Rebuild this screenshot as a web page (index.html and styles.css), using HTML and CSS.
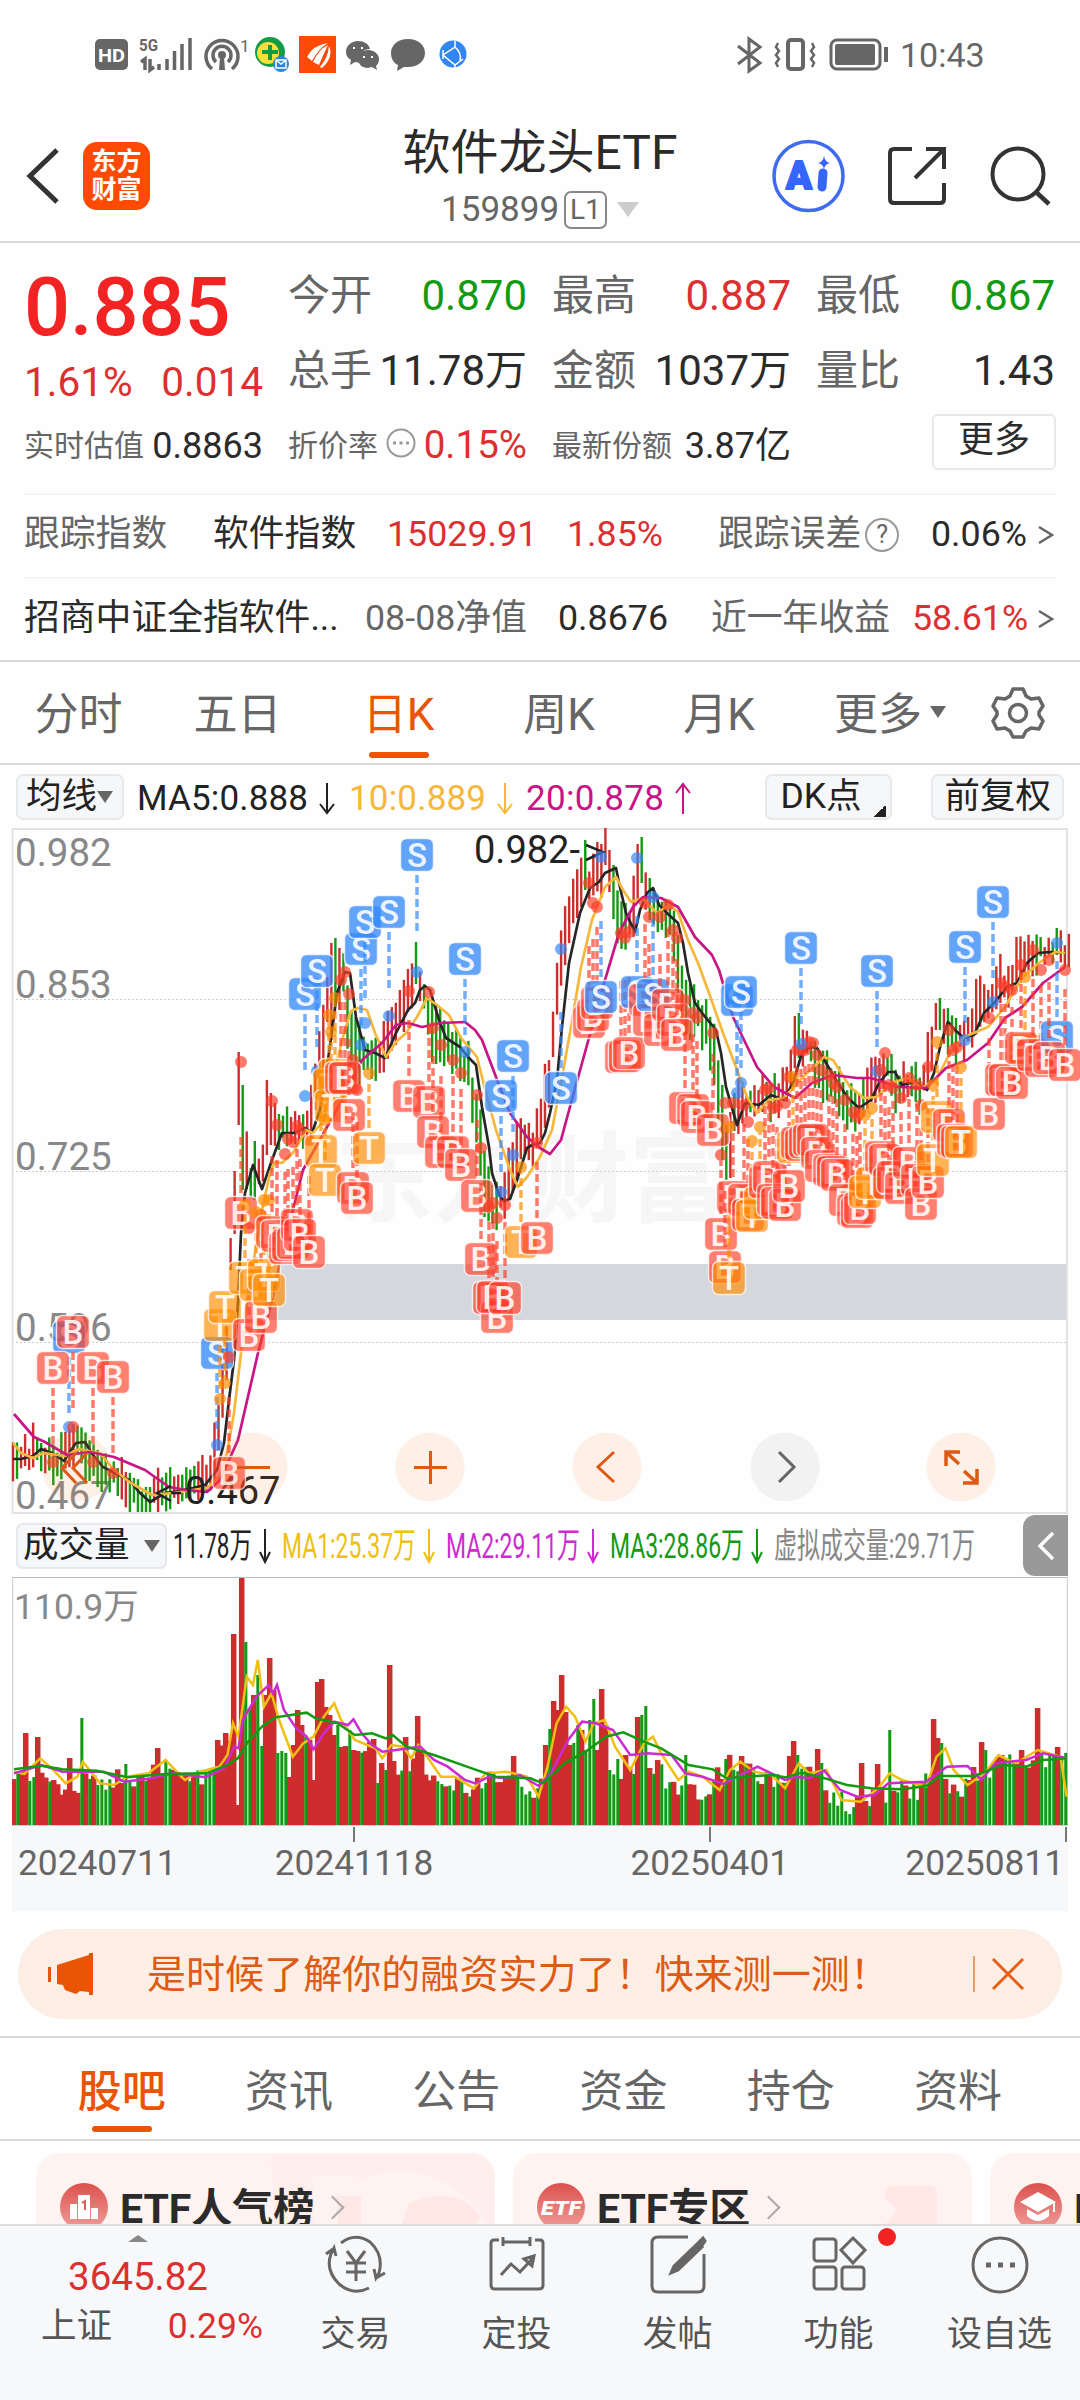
FILE: index.html
```
<!DOCTYPE html>
<html lang="zh-CN">
<head>
    <meta charset="UTF-8">
    <meta name="viewport" content="width=device-width, initial-scale=1.0">
    <title>软件龙头ETF 159899</title>
    <link rel="stylesheet" href="styles.css">
</head>
<body>
    <!-- Phone status bar -->
    <div class="status">
        <svg width="380" height="42" viewBox="92 34 380 42">
            <rect x="95" y="39" width="33" height="31" rx="5" fill="#666"/>
            <text x="98" y="62" font-size="19" font-weight="700" fill="#fff" textLength="27" lengthAdjust="spacingAndGlyphs">HD</text>
            <text x="139" y="51" font-size="16" font-weight="700" fill="#666" textLength="19" lengthAdjust="spacingAndGlyphs">5G</text>
            <path d="M141 62l4-3v11M150 59v11l4-3M159 64v6M167 59v11M174.500 51v19M182 44v26M190 38v32" stroke="#666" stroke-width="3.500" fill="none"/>
            <path d="M212 69a16 16 0 1 1 20 0M216 62a9 9 0 1 1 12 0" stroke="#666" stroke-width="3.500" fill="none"/>
            <circle cx="222" cy="55" r="4" fill="#666"/><path d="M220 57h4l1 13h-6z" fill="#666"/>
            <text x="240" y="52" font-size="17" fill="#666">1</text>
            <circle cx="270" cy="52" r="15" fill="#129c45"/><circle cx="268" cy="53" r="11" fill="#f9e03a"/>
            <path d="M262 52h16M270 45v15" stroke="#129c45" stroke-width="4"/>
            <circle cx="281" cy="64" r="8" fill="#2a86d8"/><path d="M276 60h10v8h-10zl5 4 5-4" stroke="#fff" fill="none" stroke-width="1.500"/>
            <rect x="299" y="36" width="37" height="37" fill="#ff4a05"/>
            <path d="M307 57q6-12 21-14-9 5-16 18zM313 62q6-13 15-17-4 8-9 20zM320 67q8-9 9-21 5 11-7 22z" fill="#fff"/>
            <path d="M358 41c-7 0-12 5-12 11 0 4 2 6 5 8l-1 5 5-3 5 1 1-1c-3-9 3-13 9-13-1-5-6-8-12-8zM368 50c-5 0-10 4-10 9s4 9 10 9l4-1 5 3-1-4c2-2 3-4 3-7 0-5-5-9-11-9z" fill="#666"/>
            <path d="M353 48h2M361 48h2M363 57h2M371 57h2" stroke="#fff" stroke-width="2"/>
            <path d="M408 39c-10 0-17 6-17 14 0 6 3 10 7 12l-1 6 7-4h4c10 0 17-6 17-14s-7-14-17-14z" fill="#666"/>
            <circle cx="453" cy="54" r="13.500" fill="#3385f2"/>
            <path d="M455 41v6l-12 8 12 10 8-6M455 47q7 6 5 14M443 50v9M455 65v3" fill="none" stroke="#fff" stroke-width="1.500"/>
        </svg>
        <svg class="status-right" width="154" height="42" viewBox="734 34 154 42">
            <path d="M738 46l22 17-11 8V39l11 8-22 17" fill="none" stroke="#666" stroke-width="3"/>
            <rect x="788" y="40" width="15" height="29" rx="3" fill="none" stroke="#666" stroke-width="4"/>
            <path d="M778 43l-2 4 3 4-3 4 3 4-3 4 2 4M812 43l2 4-3 4 3 4-3 4 3 4-2 4" fill="none" stroke="#666" stroke-width="2.500"/>
            <rect x="831" y="40" width="49" height="29" rx="6" fill="none" stroke="#666" stroke-width="3"/>
            <rect x="835" y="44" width="40" height="21" rx="2" fill="#666"/><path d="M886 47v15" stroke="#666" stroke-width="4"/>
        </svg>
        <span class="clock">10:43</span>
    </div>

    <!-- Header -->
    <div class="header">
        <svg class="back" width="36" height="60" viewBox="0 0 36 60"><path d="M31 4L4 30l27 26" fill="none" stroke="#333" stroke-width="5"/></svg>
        <div class="logo">东方<br>财富</div>
        <div class="title">
            <h1>软件龙头ETF</h1>
            <div class="code">159899<span class="level">L1</span><i class="tri"></i></div>
        </div>
        <svg class="tools" width="290" height="76" viewBox="770 137 290 76">
            <circle cx="808.500" cy="175" r="34.500" fill="none" stroke="#3e6bf0" stroke-width="3.500"/>
            <text x="786" y="188" font-size="38" font-weight="900" fill="#3565fb" stroke="#3565fb" stroke-width="2" stroke-linejoin="round">A</text>
            <path d="M823 172l-1 14" stroke="#3565fb" stroke-width="9" stroke-linecap="round"/>
            <path d="M824 155q1 6 6 7-5 1-6 6-1-5-6-6 5-1 6-7z" fill="#3565fb"/>
            <path d="M912 148h-18q-4 0-4 4v46q0 4 4 4h46q4 0 4-4v-16M926 148h18v20M942 150l-27 27" fill="none" stroke="#333" stroke-width="4"/>
            <circle cx="1018" cy="173" r="25.500" fill="none" stroke="#333" stroke-width="4"/>
            <path d="M1036 191l13 12" stroke="#333" stroke-width="4.500"/>
        </svg>
    </div>

    <!-- Quote summary -->
    <div class="quote">
        <div class="price">
            <b>0.885</b>
            <p><span>1.61%</span><span>0.014</span></p>
        </div>
        <div class="cell"><label>今开</label><span class="green">0.870</span></div>
        <div class="cell"><label>最高</label><span class="red">0.887</span></div>
        <div class="cell"><label>最低</label><span class="green">0.867</span></div>
        <div class="cell"><label>总手</label><span>11.78万</span></div>
        <div class="cell"><label>金额</label><span>1037万</span></div>
        <div class="cell"><label>量比</label><span>1.43</span></div>
        <div class="cell small"><label>实时估值</label><span>0.8863</span></div>
        <div class="cell small premium"><label>折价率</label>
            <svg width="30" height="30" viewBox="0 0 30 30"><circle cx="15" cy="15" r="13.500" fill="none" stroke="#999" stroke-width="2"/><path d="M7 15h3M13.500 15h3M20 15h3" stroke="#999" stroke-width="3"/></svg>
            <span class="red">0.15%</span></div>
        <div class="cell small"><label>最新份额</label><span>3.87亿</span></div>
        <div class="cell more"><button>更多</button></div>
    </div>
    <div class="track index-row">
        <span class="gray">跟踪指数</span><span>软件指数</span><span class="red">15029.91</span><span class="red">1.85%</span>
        <span class="gray">跟踪误差<i class="help">?</i></span><span>0.06%</span><svg width="18" height="24" viewBox="0 0 18 24"><path d="M2 4l13 8-13 8" fill="none" stroke="#666" stroke-width="2.500"/></svg>
    </div>
    <div class="track fund-row">
        <span>招商中证全指软件...</span><span class="gray">08-08净值</span><span>0.8676</span><span class="gray">近一年收益</span><span class="red">58.61%</span><svg width="18" height="24" viewBox="0 0 18 24"><path d="M2 4l13 8-13 8" fill="none" stroke="#666" stroke-width="2.500"/></svg>
    </div>

    <!-- Period tabs -->
    <div class="periods">
        <span>分时</span><span>五日</span><span class="active">日K</span><span>周K</span><span>月K</span><span>更多<i class="tri"></i></span>
        <svg width="54" height="54" viewBox="0 0 54 54" fill="none" stroke="#666" stroke-width="3.500"><path d="M22 3h10l3 7 5 3 8-1 4 8-4 6v3l4 6-4 8-8-1-5 3-3 6H22l-3-6-5-3-8 1-4-8 4-6v-3l-4-6 4-8 8 1 5-3z" stroke-linejoin="round"/><circle cx="27" cy="27" r="8.500"/></svg>
    </div>

    <!-- K line chart -->
    <div class="ma-row">
        <span class="chip ma-chip">均线<i class="tri"></i></span>
        <svg class="legend" width="560" height="46" viewBox="134 773 560 46" font-size="35">
            <text x="137" y="809" fill="#222" textLength="171">MA5:0.888</text><path d="M327 782v29m-7-8l7 9 7-9" stroke="#222"/>
            <text x="349" y="809" fill="#f5b83d" textLength="137">10:0.889</text><path d="M505 782v29m-7-8l7 9 7-9" stroke="#f5b83d"/>
            <text x="526" y="809" fill="#c71585" textLength="138">20:0.878</text><path d="M683 813v-29m-7 8l7-9 7 9" stroke="#c71585"/>
        </svg>
        <span class="chip dk">DK点</span>
        <span class="chip">前复权</span>
    </div>
    <svg id="kline" width="1080" height="686" viewBox="0 828 1080 686"></svg>

    <!-- Volume chart -->
    <div class="vol-row">
        <span class="chip vol-chip">成交量<i class="tri"></i></span>
        <svg class="legend" width="812" height="46" viewBox="170 1523 812 46" font-size="35">
            <g fill="#222" stroke="#222"><text x="173" y="1558" textLength="79" lengthAdjust="spacingAndGlyphs">11.78万</text><path d="M265 1529v32m-5-9l5 10 5-10"/></g>
            <g fill="#f0c010" stroke="#f0c010"><text x="282" y="1558" textLength="134" lengthAdjust="spacingAndGlyphs">MA1:25.37万</text><path d="M429 1529v32m-5-9l5 10 5-10"/></g>
            <g fill="#cc2bd1" stroke="#cc2bd1"><text x="446" y="1558" textLength="134" lengthAdjust="spacingAndGlyphs">MA2:29.11万</text><path d="M593 1529v32m-5-9l5 10 5-10"/></g>
            <g fill="#129a12" stroke="#129a12"><text x="610" y="1558" textLength="134" lengthAdjust="spacingAndGlyphs">MA3:28.86万</text><path d="M757 1529v32m-5-9l5 10 5-10"/></g>
            <text x="774" y="1558" fill="#888" textLength="201" lengthAdjust="spacingAndGlyphs">虚拟成交量:29.71万</text>
        </svg>
        <span class="drawer"><svg width="20" height="32" viewBox="0 0 20 32"><path d="M17 3L4 16l13 13" fill="none" stroke="#fff" stroke-width="3.500"/></svg></span>
    </div>
    <div class="volume">
        <svg id="volume" width="1056" height="249" viewBox="17 231 1534 747" preserveAspectRatio="none"></svg>
        <span class="vol-max">110.9万</span>
    </div>
    <div class="dates"><span>20240711</span><span>20241118</span><span>20250401</span><span>20250811</span></div>

    <!-- Promo banner -->
    <div class="banner">
        <svg width="48" height="42" viewBox="0 0 48 42" fill="#e95504"><path d="M1 14h3v15H1zM10 12L42 2V0h4v42h-4v-3l-9-1-4 3-11-4-2-5-6-1z"/></svg>
        <span class="promo">是时候了解你的融资实力了！快来测一测！</span>
        <i class="bar"></i>
        <svg width="34" height="34" viewBox="0 0 34 34"><path d="M2 2l30 30M32 2L2 32" stroke="#e46018" stroke-width="3"/></svg>
    </div>

    <!-- Info tabs -->
    <div class="info-tabs">
        <span class="active">股吧</span><span>资讯</span><span>公告</span><span>资金</span><span>持仓</span><span>资料</span>
    </div>
    <div class="cards">
        <div class="card rank">
            <svg width="48" height="48" viewBox="0 0 48 48"><circle cx="24" cy="24" r="24" fill="url(#pink)"/><path d="M10 21h7v15h-7zM18 12h12v24H18zM31 25h7v11h-7z" fill="#fff"/><path d="M22 20l3-2v9" fill="none" stroke="#e05a55" stroke-width="2"/></svg>
            <b>ETF人气榜</b><i class="go"></i>
            <svg class="deco" width="224" height="80" viewBox="0 0 224 80"><path d="M0 0h224v80H3z" fill="#ffeeec"/><path d="M41 22h38l12 4q46-18 85 5 31 18 46 49H44z" fill="#fff3f1"/><path d="M65 43h25v37H68zM128 80l10-30q50-20 72 15l-14 15-16-7-13 7z" fill="#ffe7e5"/></svg>
        </div>
        <div class="card">
            <svg width="48" height="48" viewBox="0 0 48 48"><defs><linearGradient id="pink" x2="0" y2="1"><stop stop-color="#dc514d"/><stop offset="1" stop-color="#f0a09c"/></linearGradient></defs><circle cx="24" cy="24" r="24" fill="url(#pink)"/><text x="4" y="32" font-size="20" font-weight="900" font-style="italic" fill="#fff" textLength="40" lengthAdjust="spacingAndGlyphs">ETF</text></svg>
            <b>ETF专区</b><i class="go"></i>
            <svg class="deco arrow" width="56" height="40" viewBox="0 0 56 40"><path d="M8 0h38q7 0 7 8v32H0l13-16L1 12Q0 2 8 0z" fill="#ffe7e5"/></svg>
        </div>
        <div class="card">
            <svg width="48" height="48" viewBox="0 0 48 48"><circle cx="24" cy="24" r="24" fill="url(#pink)"/><path d="M24 9L6 19l18 10 18-10zM13 26v7q11 10 22 0v-7l-11 6zM39 20h2v9h-2z" fill="#fff"/></svg>
            <b>ETF</b>
        </div>
    </div>

    <!-- Bottom bar -->
    <div class="bottom">
        <div class="market">
            <i class="up"></i>
            <span class="red point">3645.82</span>
            <p><span>上证</span><span class="red">0.29%</span></p>
        </div>
        <div class="nav"><svg viewBox="0 0 66 60"><path d="M18 9Q32-2 47 8q14 13 9 31l-3 5-2-9M53 44l9-5M46 54q-16 8-30-4Q2 36 8 20l3-6 2 8M10 15l-7 5"/><path d="M24 17l9 12 9-12M23 29h20M23 38h20M33 29v18"/></svg>交易</div>
        <div class="nav"><svg viewBox="0 0 66 60"><path d="M15 6h-5q-3 0-3 3v42q0 4 4 4h44q4 0 4-4V9q0-3-3-3h-5M19 8h28M19 3v9M46 3v9M17 41l10-11 9 8 13-14M40 25l10-3-2 10z"/></svg>定投</div>
        <div class="nav"><svg viewBox="0 0 66 60"><path d="M43 3H13Q7 3 7 9v43q0 6 6 6h40q6 0 6-6V20"/><path d="M26 39l3-7 24-23 4 4-24 23zM55 7l3-3 2 3-2 3z" fill="#666"/></svg>发帖</div>
        <div class="nav"><svg viewBox="0 0 66 60"><rect x="8" y="5" width="22" height="22" rx="3"/><rect x="8" y="33" width="22" height="22" rx="3"/><rect x="36" y="33" width="22" height="22" rx="3"/><path d="M47 4l12 12-12 13-12-13z"/></svg>功能<i class="dot"></i></div>
        <div class="nav"><svg viewBox="0 0 66 60"><circle cx="33" cy="31" r="27"/><path d="M19 31h5M31 31h5M43 31h5" stroke-width="5"/></svg>设自选</div>
    </div>
    <script src="chart.js"></script>
</body>
</html>
```
FILE: styles.css
```
* {
    box-sizing: border-box;
}
body {
    margin: 0;
    width: 1080px;
    height: 2400px;
    overflow: hidden;
    background: #fefefe;
    color: #2b2b2b;
    font-family: Roboto, "Noto Sans CJK SC", sans-serif;
    font-size: 35px;
    line-height: 1;
}
h1, p {
    margin: 0;
    font-weight: 400;
}
i {
    font-style: normal;
}
svg {
    flex: none;
    display: block;
}
.red { color: #dc3030; }
.green { color: #129a12; }
.gray { color: #666; }
.tri {
    display: inline-block;
    border: 8px solid transparent;
    border-top: 12px solid #666;
    border-bottom: 0;
}
.status {
    display: flex;
    align-items: center;
    height: 110px;
    padding-left: 92px;
    color: #666;
}
.status-right {
    margin-left: 262px;
}
.clock {
    margin-left: 12px;
    font-size: 34px;
}
.header {
    display: flex;
    align-items: center;
    height: 133px;
    padding: 0 20px 0 26px;
    border-bottom: 2px solid #d8d8d8;
}
.logo {
    width: 67px;
    height: 68px;
    margin-left: 21px;
    padding: 6px 0;
    border-radius: 14px;
    background: #ff4a05;
    color: #fff;
    font-size: 25px;
    font-weight: 700;
    line-height: 28px;
    text-align: center;
}
.title {
    flex: 1;
    padding: 6px 0 0 160px;
    text-align: center;
}
.title h1 {
    font-size: 48px;
    white-space: nowrap;
}
.code {
    display: flex;
    align-items: center;
    justify-content: center;
    height: 38px;
    margin-top: 14px;
    color: #666;
}
.level {
    margin: 0 10px 0 5px;
    padding: 3px 4px;
    border: 2px solid #888;
    border-radius: 7px;
    font-size: 28px;
}
.code .tri {
    border-width: 15px 11px 0;
    border-top-color: #ccc;
}
.quote {
    display: grid;
    grid-template-columns: repeat(4, 1fr);
    grid-auto-rows: 75px;
    column-gap: 25px;
    height: 250px;
    padding: 15px 25px 0 24px;
}
.price {
    grid-row: span 2;
    color: #dc3030;
    font-size: 40.5px;
}
.price b {
    display: block;
    margin-top: 9px;
    color: #f22323;
    font-size: 81px;
    font-weight: 500;
}
.price p {
    display: flex;
    justify-content: space-between;
    margin-top: 14px;
}
.cell {
    display: flex;
    align-items: center;
    justify-content: space-between;
    font-size: 42px;
    white-space: nowrap;
}
.cell label {
    color: #666;
    font-size: 42px;
}
.cell.small {
    font-size: 36px;
}
.cell.small label {
    font-size: 30px;
}
.premium svg {
    margin-bottom: 6px;
}
.premium span {
    font-size: 38.5px;
}
.cell.more {
    justify-content: flex-end;
}
button {
    width: 124px;
    height: 56px;
    margin: 0 -1px 8px 0;
    padding: 0 0 4px;
    border: 2px solid #e8e8e8;
    border-radius: 6px;
    background: #fff;
    color: #2b2b2b;
    font: 36px/1 Roboto, "Noto Sans CJK SC", sans-serif;
}
.track {
    display: grid;
    align-items: center;
    height: 84px;
    margin: 0 24px;
    padding-bottom: 2px;
    border-top: 2px solid #f4f5f7;
    font-size: 35.8px;
    white-space: nowrap;
}
.index-row {
    grid-template-columns: 189px 174px 180px 151px 213px 106px 18px;
}
.fund-row {
    grid-template-columns: 341px 193px 153px 201px 125px 18px;
    height: 83px;
}
.help {
    display: inline-block;
    width: 34px;
    height: 34px;
    margin-left: 4px;
    border: 2px solid #999;
    border-radius: 50%;
    font-size: 25px;
    line-height: 30px;
    text-align: center;
    vertical-align: 3px;
}
.periods {
    display: grid;
    grid-template-columns: 157px 161px 161px 160px 160px 182px 54px;
    column-gap: 0;
    align-items: center;
    height: 105px;
    border-top: 2px solid #d8d8d8;
    border-bottom: 2px solid #d8d8d8;
    color: #666;
    font-size: 44px;
    text-align: center;
}
.periods span {
    position: relative;
    padding-top: 5px;
}
.periods svg {
    margin-left: 10px;
}
.periods .tri {
    margin-left: 8px;
    vertical-align: 12px;
}
.active {
    position: relative;
    color: #e95504;
}
.active::after {
    content: "";
    position: absolute;
    left: 50%;
    bottom: -21px;
    width: 60px;
    height: 6px;
    margin-left: -30px;
    border-radius: 3px;
    background: #e95504;
}
.ma-row, .vol-row {
    display: flex;
    align-items: center;
    height: 63px;
    padding: 0 16px;
}
.chip {
    display: flex;
    align-items: center;
    height: 46px;
    padding: 0 11px;
    border: 2px solid #e6e8ec;
    border-radius: 7px;
    background: #f6f7f9;
    color: #222;
    font-size: 35.5px;
    white-space: nowrap;
}
.ma-chip {
    width: 108px;
    padding: 0 8px;
}
.legend {
    margin-left: 10px;
}
.legend path {
    fill: none;
    stroke-width: 2;
}
.legend text {
    stroke: none;
}
.dk {
    width: 127px;
    margin: 0 39px 0 auto;
    padding-left: 13px;
    background: linear-gradient(135deg, transparent 50%, #222 50%) 107px 29px / 12px 12px no-repeat, #f6f7f9;
}
#kline text {
    font-family: Roboto, "Noto Sans CJK SC", sans-serif;
}
.vol-row {
    padding-right: 12px;
}
.vol-chip {
    width: 151px;
    padding: 0 5px;
}
.vol-chip .tri {
    margin-left: 14px;
}
.vol-row .legend {
    margin-left: 3px;
}
.drawer {
    display: flex;
    align-items: center;
    justify-content: center;
    width: 45px;
    height: 61px;
    margin-left: auto;
    border-radius: 12px 0 0 12px;
    background: #999;
}
.volume {
    position: relative;
    margin: 0 12px;
}
.vol-max {
    position: absolute;
    left: 2px;
    top: 13px;
    color: #888;
    font-size: 35.5px;
}
.dates {
    display: flex;
    height: 85px;
    margin: 0 12px;
    padding: 20px 4px 0 6px;
    background: linear-gradient(#777, #777) 341px 1px / 2px 15px no-repeat,
        linear-gradient(#777, #777) 697px 1px / 2px 15px no-repeat,
        linear-gradient(#777, #777) 1053px 1px / 2px 15px no-repeat, #f7f8fa;
    color: #666;
    font-size: 35.3px;
}
.dates span:nth-child(2) { margin-left: 98px; }
.dates span:nth-child(3) { margin-left: 197px; }
.dates span:nth-child(4) { margin-left: auto; }
.banner {
    display: flex;
    align-items: center;
    height: 90px;
    margin: 18px 18px 17px;
    padding: 0 37px 0 29px;
    border-radius: 45px;
    background: #fdeee5;
    color: #dd5b14;
}
.promo {
    flex: 1;
    margin-left: 52px;
    padding-top: 2px;
    font-size: 39px;
    letter-spacing: .05px;
}
.bar {
    width: 2px;
    height: 36px;
    margin-right: 16px;
    background: #e89c70;
}
.info-tabs {
    display: grid;
    grid-template-columns: repeat(6, 167.3px);
    align-items: center;
    height: 105px;
    padding-left: 38px;
    border-top: 2px solid #d8d8d8;
    border-bottom: 2px solid #d8d8d8;
    color: #666;
    font-size: 44px;
    text-align: center;
}
.info-tabs span {
    padding-top: 7px;
}
.info-tabs .active {
    font-weight: 500;
}
.info-tabs .active::after {
    bottom: -18px;
}
.cards {
    display: flex;
    gap: 18px;
    height: 83px;
    padding: 12px 0 0 36px;
    overflow: hidden;
}
.card {
    position: relative;
    display: flex;
    flex: none;
    align-items: flex-start;
    width: 459px;
    height: 140px;
    padding: 30px 24px;
    border-radius: 24px;
    background: #fff3f1;
    overflow: hidden;
}
.card:last-child {
    width: 100px;
    border-radius: 24px 0 0 0;
}
.card b {
    margin: 6px 0 0 12px;
    font-size: 41px;
    z-index: 1;
}
.deco {
    position: absolute;
    right: 0;
    top: 0;
}
.deco.arrow {
    right: 32px;
    top: 33px;
}
.go {
    width: 17px;
    height: 17px;
    margin: 16px 0 0 10px;
    border: solid #aaa;
    border-width: 2px 2px 0 0;
    transform: rotate(45deg);
    z-index: 1;
}
.bottom {
    position: relative;
    display: flex;
    height: 176px;
    border-top: 2px solid #dcdcdc;
    background: #f7f8fa;
    color: #555;
}
.market {
    width: 275px;
    padding-top: 9px;
}
.up {
    display: block;
    width: 0;
    margin-left: 128px;
    border: 10px solid transparent;
    border-top: 0;
    border-bottom: 7px solid #888;
}
.point {
    display: block;
    margin: 16px 0 0 68px;
    font-size: 38.5px;
}
.market p {
    display: flex;
    justify-content: space-between;
    margin: 12px 12px 0 41px;
    font-size: 35.5px;
}
.nav {
    position: relative;
    width: 161px;
    padding-top: 8px;
    text-align: center;
}
.nav svg {
    width: 66px;
    height: 60px;
    margin: 0 auto 23px;
    fill: none;
    stroke: #666;
    stroke-width: 3;
}
.dot {
    position: absolute;
    left: 120px;
    top: 2px;
    width: 18px;
    height: 18px;
    border-radius: 50%;
    background: #f22323;
}
```
FILE: chart.js
```
const RED = '#cd2d2d', GREEN = '#129a12';

// Moving averages of the price
const ma5 = '13,1459 21,1459 33,1456 41,1449 52,1453 64,1461 69,1453 76,1443 85,1442 93,1455 103,1467 119,1475 129,1480 139,1492 150,1502 165,1493 179,1491 193,1488 205,1485 217,1470 224,1443 229,1400 234,1360 238,1303 241,1233 245,1193 253,1165 262,1189 272,1160 282,1133 293,1133 305,1128 312,1133 320,1110 329,1053 337,993 345,972 350,973 356,1017 365,1050 375,1053 385,1058 396,1033 408,1010 415,1003 420,990 425,986 430,990 439,1020 446,1038 460,1047 468,1057 476,1065 482,1107 489,1147 492,1173 499,1195 504,1201 510,1199 517,1180 527,1148 532,1145 540,1143 545,1133 550,1113 557,1080 562,1027 569,963 580,913 590,888 599,882 605,873 616,868 619,883 626,913 635,932 640,910 647,893 653,888 659,905 669,915 678,923 683,943 688,973 695,1003 702,1013 716,1030 721,1053 726,1087 737,1125 745,1103 759,1105 771,1095 784,1100 793,1083 802,1053 810,1047 817,1048 826,1063 836,1080 848,1098 859,1108 871,1100 879,1083 888,1072 895,1072 902,1085 915,1082 927,1090 934,1073 941,1043 948,1022 955,1030 964,1038 974,1035 984,1013 995,1002 1007,987 1017,983 1027,963 1038,953 1050,952 1062,953';
const ma10 = '13,1443 21,1453 33,1458 43,1453 65,1456 79,1449 100,1453 114,1470 131,1483 152,1495 172,1493 207,1488 219,1477 227,1453 234,1413 241,1353 248,1293 255,1253 262,1210 270,1173 275,1162 282,1163 293,1153 306,1130 313,1133 324,1120 334,1073 344,1033 351,1011 358,1008 367,1010 375,1033 386,1057 396,1042 406,1033 417,1017 427,998 437,1005 449,1015 461,1038 477,1057 486,1093 496,1130 510,1170 518,1187 527,1177 540,1157 552,1130 561,1083 571,1027 581,967 592,920 605,887 616,877 623,890 631,902 642,898 657,913 669,905 678,912 688,940 698,963 709,993 723,1033 736,1067 747,1097 757,1113 769,1100 784,1098 802,1078 824,1057 833,1060 850,1087 864,1098 877,1097 891,1083 908,1078 922,1088 936,1080 950,1053 964,1037 988,1027 1005,1007 1022,978 1039,963 1055,952 1065,953';
const ma20 = '14,1414 34,1437 45,1442 67,1455 90,1452 114,1457 145,1470 169,1487 186,1490 207,1492 220,1480 238,1440 258,1353 272,1300 282,1253 303,1170 327,1127 344,1097 362,1060 382,1043 396,1025 408,1023 422,1027 441,1023 465,1022 475,1030 482,1040 496,1077 510,1113 527,1137 540,1148 550,1154 561,1140 571,1103 592,1027 605,980 619,933 633,907 643,897 661,898 678,907 695,937 712,955 719,970 733,1017 757,1067 774,1087 795,1098 812,1083 833,1075 857,1078 871,1078 898,1087 926,1088 946,1068 967,1060 988,1043 1005,1018 1022,1007 1043,983 1065,967';

// Trades: type, x, badge y, dot y
const trades = [
    ['S',69,1337,1427],['B',73,1332,1427],['B',53,1368,1462],['B',93,1368,1462],['B',113,1377,1473],
    ['S',217,1353,1445],['T',220,1325,1399],['T',225,1307,1383],['B',229,1473,1357],
    ['B',241,1213,1062],['B',249,1335,1228],['B',261,1317,1215],['T',245,1278,1205],['T',256,1285,1212],['T',264,1275,1200],['T',269,1290,1200],
    ['B',272,1232,1101],['B',277,1236,1125],['B',285,1248,1154],['B',288,1245,1139],['B',293,1243,1142],['B',297,1225,1126],['B',300,1235,1130],['B',309,1252,1140],
    ['S',305,994,1096],['S',317,971,1071],['T',335,1075,998],['T',329,1085,1015],['T',331,1106,1032],['T',321,1151,1073],['T',325,1180,1120],
    ['B',341,1078,980],['B',345,1078,972],['B',349,1115,994],['B',353,1188,1060],['B',357,1198,1090],['T',369,1148,1073],
    ['S',361,949,1045],['S',365,922,1023],['S',389,912,1016],['S',417,855,972],['S',465,959,1052],
    ['B',409,1096,991],['B',429,1102,992],['B',433,1132,1028],['B',441,1152,1045],['B',453,1152,1060],['B',461,1165,1073],
    ['B',477,1196,1095],['B',481,1259,1148],['B',489,1298,1207],['B',497,1317,1218],['B',493,1297,1203],['B',505,1298,1205],['T',521,1242,1167],['B',537,1238,1143],
    ['S',501,1096,1192],['S',513,1056,1155],['S',561,1088,949],
    ['B',589,1022,883],['B',593,1015,903],['B',597,1003,907],['S',601,997,857],['B',621,1057,933],['B',625,1056,938],['B',629,1053,932],
    ['S',637,992,858],['B',645,1000,903],['B',649,1020,917],['S',653,995,897],['B',660,1030,917],['B',668,1005,905],['B',673,1020,930],['B',677,1035,938],
    ['B',685,1108,1000],['B',693,1110,1013],['B',697,1117,1018],['B',713,1130,1033],['B',733,1197,1103],['B',721,1234,1155],['B',725,1267,1103],['T',729,1278,1127],
    ['S',737,1000,1093],['S',741,992,1083],['B',744,1200,1105],['B',748,1215,1122],['T',752,1216,1141],['T',760,1203,1127],
    ['B',765,1182,1090],['B',769,1177,1088],['B',773,1200,1108],['B',777,1203,1106],['B',785,1205,1103],['B',789,1186,1077],
    ['T',793,1147,1077],['B',797,1143,1050],['B',801,1145,1050],['B',805,1142,1050],['B',809,1140,1042],['B',813,1140,1043],['B',817,1153,1055],['B',821,1166,1070],['B',829,1170,1075],['B',833,1172,1083],['B',837,1175,1087],
    ['S',801,948,1044],['B',845,1200,1100],['B',853,1210,1112],['B',857,1212,1117],['B',860,1208,1113],['T',865,1192,1115],['T',872,1183,1108],
    ['S',877,971,1071],['B',881,1157,1070],['B',885,1160,1053],['B',889,1183,1085],['B',893,1177,1088],['B',901,1188,1098],['B',909,1163,1078],['B',917,1180,1085],['B',921,1204,1105],['B',928,1182,1067],['T',933,1160,1085],['T',937,1117,1042],
    ['B',949,1125,1030],['B',953,1140,1050],['B',957,1142,1047],['T',961,1142,1067],['S',965,947,1040],['B',989,1114,1018],['S',993,902,1002],
    ['B',1001,1080,983],['B',1005,1080,987],['B',1012,1083,990],['T',1025,1050,977],['B',1021,1048,965],['B',1033,1055,950],['B',1041,1061,970],['S',1057,1037,943],['B',1049,1058,960],['B',1065,1065,970]
];
const tint = { S: '#3287fa', B: '#ff3c28', T: '#ff8c00' };

// Small repeatable noise, 0..1
function noise(i) {
    const v = Math.sin(i * 127.1 + 11.7) * 43758.5453;
    return v - Math.floor(v);
}
function toPoints(s) {
    return s.split(' ').map(p => p.split(',').map(Number));
}
function at(points, x) {
    for (let i = 1; i < points.length; i++) {
        if (x <= points[i][0]) {
            const [x0, y0] = points[i - 1], [x1, y1] = points[i];
            return y0 + (y1 - y0) * (x - x0) / (x1 - x0);
        }
    }
    return points[points.length - 1][1];
}

let k = '<text x="335" y="1214" font-size="98" font-weight="700" fill="#f6f6f6">东方财富</text>';
k += '<rect x="265" y="1264" width="802" height="56" fill="#d4d7dc"/>';
k += '<path d="M12 999.500h1055M12 1171.500h1055M12 1342.500h1055" stroke="#ccc" stroke-dasharray="2 2"/>';
k += '<path d="M12.500 1513V829H1067V1513z" fill="none" stroke="#e3e3e3" stroke-width="2"/>';
[[0.982, 866], [0.853, 998], [0.725, 1170], [0.596, 1341], [0.467, 1509]].forEach(([v, y]) => {
    k += `<text x="15" y="${y}" font-size="38.500" fill="#888">${v}</text>`;
});

// Candles
const path5 = toPoints(ma5);
const fixed = {
    54: [1238, 1270, RED], 56: [1052, 1125, RED], 57: [1085, 1190, GREEN], 60: [1141, 1200, GREEN], 63: [1080, 1155, RED], 64: [1093, 1145, RED], 66: [1114, 1150, GREEN],
    79: [943, 1040, RED], 80: [938, 1003, GREEN], 81: [948, 1010, RED], 98: [969, 1012, RED], 100: [942, 984, GREEN],
    142: [840, 890, GREEN], 146: [844, 898, RED], 147: [828, 865, RED], 148: [850, 892, RED], 155: [844, 900, RED], 156: [837, 883, GREEN],
    176: [1085, 1160, GREEN], 177: [1125, 1180, GREEN], 178: [1112, 1178, RED], 195: [1013, 1058, GREEN], 229: [1003, 1030, RED], 230: [998, 1030, GREEN],
    259: [928, 955, GREEN]
};
for (let i = 0; i < 263; i++) {
    const x = 13 + i * 4.03;
    const a = at(path5, x), lead = at(path5, x + 7), slope = lead - a;
    const mid = lead + slope * 0.2 + (noise(i) - 0.5) * 14;
    const len = 8 + noise(i + 400) * 13 + Math.min(Math.abs(slope) * 0.5, 14);
    const c = slope * 1.2 + (noise(i + 900) - 0.5) * 16 < 0 ? RED : GREEN;
    const [top, bottom, color] = fixed[i] || [Math.max(835, mid - len), Math.min(1512, mid + len), c];
    k += `<path d="M${x} ${top}V${bottom}" stroke="${color}" stroke-width="2.400"/>`;
}
k += `<g fill="none" stroke-width="2.700" stroke-linejoin="round"><polyline points="${ma5}" stroke="#262626"/><polyline points="${ma10}" stroke="#f5b83d"/><polyline points="${ma20}" stroke="#c71585"/></g>`;
k += '<text x="474" y="863" font-size="38" fill="#222">0.982-</text><path d="M586 845l17 7-17 8M171 1486l-14 7 14 8M171 1493h10" fill="none" stroke="#222" stroke-width="2.500"/>';
k += '<text x="185" y="1504" font-size="38" fill="#222">0.467</text>';

// Trade badges
trades.forEach(([t, x, y, dot]) => {
    const dir = dot > y ? 1 : -1;
    k += `<g><g opacity=".68"><circle cx="${x}" cy="${dot}" r="6" fill="${tint[t]}"/>
        <path d="M${x} ${y + dir * 20}v${dir * 57}" stroke="${tint[t]}" stroke-width="3.500" stroke-dasharray="8 4"/></g>
        <rect x="${x - 16.5}" y="${y - 16.5}" width="33" height="33" rx="6" fill="${tint[t]}" fill-opacity="${t === 'S' ? 0.76 : 0.66}" stroke="#fff" stroke-opacity=".75" stroke-width="1.500"/>
        <text x="${x}" y="${y + 11.5}" font-size="33" font-weight="500" text-anchor="middle" fill="#fff" fill-opacity=".9">${t}</text></g>`;
});

// Round chart buttons
[76, 253, 430, 607, 785, 961].forEach((x, i) => {
    k += `<circle cx="${x}" cy="1467" r="34.500" fill="${i === 4 ? '#888' : '#ff6a1a'}" fill-opacity=".1"/>`;
});
k += '<g fill="none" stroke="#dc5b14" stroke-width="3"><path d="M76 1453l-14 15 14 15M87 1453l-14 15 14 15M237 1467.500h33M414 1467.500h33M430.500 1451v33M614 1452l-16 15 16 15"/><path d="M946 1466v-14h14M947 1453l12 11M977 1469v14h-14M976 1482l-12-11" stroke-width="3.500"/><path d="M779 1452l15 15-15 15" stroke="#666"/></g>';
document.getElementById('kline').innerHTML = k;

// Volume bars: the general level, then the days that stand out
const level = toPoints('0,50 8,52 12,38 20,42 30,48 38,60 43,50 48,45 50,65 54,80 60,120 66,72 72,90 80,95 86,72 90,62 96,55 100,65 105,50 110,45 115,35 120,50 127,40 130,28 132,50 140,85 148,80 150,50 160,58 165,40 172,30 178,60 185,55 190,40 195,60 200,45 204,25 210,20 215,32 222,35 226,35 229,55 236,35 240,50 246,62 250,65 256,65 260,70 263,65');
const days = {
    3: 92, 6: 88, 14: 67, 17: -107, 28: -61, 36: 77, 38: -65, 51: 85, 53: 92, 55: 191, 56: 20, 57: 247, 58: -183, 60: 130, 61: -150, 62: -79, 63: 130, 64: 167, 65: 135, 66: -72, 67: -74, 68: -72, 69: 48, 70: 80, 71: 115, 72: 100, 73: -88, 74: 85, 75: 45, 76: 143, 77: 146, 78: 118, 79: 110, 80: 90, 81: -100, 82: 78, 83: 79, 84: -95, 85: 75, 86: 74,
    89: 83, 90: 86, 91: -42, 92: 62, 93: -55, 94: 160, 95: 64, 98: 88, 101: 109, 102: 75, 125: 69, 133: 80, 134: -96, 135: 124, 136: 115, 137: 150, 138: 113, 139: 80, 140: -82, 141: -100, 142: 95, 143: -75, 144: -105, 145: -126, 146: 75, 147: 136, 148: 100, 149: -55, 151: -66, 153: 70, 156: 108, 157: -110, 158: -119, 159: 57, 168: -70, 178: -66, 182: 69, 194: 69, 195: 84, 196: -70, 201: 76, 202: -62, 212: 62, 216: 61, 219: -95, 230: 106, 231: 87, 232: -82, 242: 83, 243: -75, 252: 75, 256: 117
};
let v = '<path d="M17 232.500H1551M17 977H1551" stroke="#bbb" stroke-width="3"/><path d="M18 232V977M1550 232V977" stroke="#ccc" stroke-width="1.500"/>';
for (let i = 0; i < 264; i++) {
    const up = noise(i + 77) > 0.5;
    const d = days[i] || (up ? 1 : -1) * (at(level, i) + (noise(i + 31) - 0.5) * 22);
    const h = Math.abs(d) * 3, w = d > 0 ? 8 : 4.4;
    v += `<rect x="${(d > 0 ? 15.5 : 17.5) + i * 5.81}" y="${975 - h}" width="${w}" height="${h}" fill="${d > 0 ? RED : GREEN}"/>`;
}
const v5 = '20,815 35,822 58,775 75,805 95,850 112,830 120,785 145,850 165,855 185,830 215,820 240,780 268,840 290,815 318,800 330,765 338,670 346,710 358,530 367,555 374,480 383,620 394,580 405,660 425,770 440,730 455,710 470,650 485,610 495,660 515,720 545,745 555,775 568,735 585,740 597,775 607,735 620,770 640,830 660,830 688,865 705,820 735,815 765,830 782,890 795,800 808,670 822,620 835,650 850,725 862,670 878,660 893,740 915,810 935,730 948,710 960,760 985,840 1000,815 1020,830 1045,870 1060,810 1075,785 1095,815 1120,825 1140,865 1160,790 1175,820 1200,810 1222,900 1250,905 1275,865 1292,820 1310,840 1345,860 1360,770 1373,745 1385,810 1405,855 1430,820 1450,765 1475,790 1507,750 1540,770 1549,890';
const v10 = '20,820 60,795 90,815 150,815 180,845 220,835 250,820 298,832 325,805 340,740 346,745 352,660 372,590 390,555 396,580 402,555 412,630 430,685 445,710 455,748 470,700 485,665 505,675 513,658 525,700 540,735 555,755 575,750 610,740 630,780 650,800 675,840 690,850 710,830 735,835 755,825 782,858 800,820 825,720 845,665 865,670 890,690 915,765 940,760 975,765 995,820 1020,830 1050,852 1075,825 1100,800 1140,840 1155,830 1175,835 1197,812 1220,870 1245,890 1270,885 1290,850 1345,845 1375,800 1405,798 1425,840 1445,790 1490,780 1515,760 1549,775';
const v20 = '20,808 60,797 90,808 140,812 185,832 240,822 300,820 330,795 345,775 360,725 380,680 400,652 445,638 458,655 490,670 515,705 540,700 560,715 570,705 590,740 630,765 685,805 720,830 770,835 788,850 820,790 850,755 880,710 905,697 935,725 960,745 1000,795 1035,808 1055,835 1120,825 1140,832 1165,818 1190,830 1230,855 1265,865 1310,868 1345,858 1365,828 1415,828 1455,795 1490,800 1515,780 1549,775';
[[v5, '#f0c010'], [v10, '#cc2bd1'], [v20, '#129a12']].forEach(([points, color]) => {
    v += `<polyline points="${points}" fill="none" stroke="${color}" stroke-width="2.500" vector-effect="non-scaling-stroke"/>`;
});
document.getElementById('volume').innerHTML = v;
```
